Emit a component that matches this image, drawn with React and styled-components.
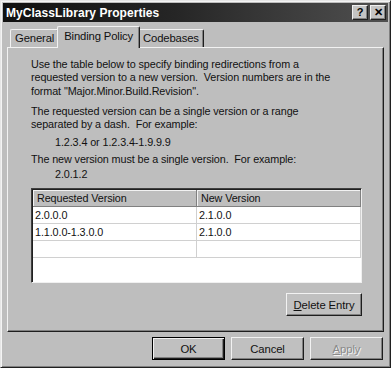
import React from "react";
import styled, { createGlobalStyle } from "styled-components";

const Global = createGlobalStyle`
  html, body { margin: 0; padding: 0; background: #bdbdbd; }
  body { font-family: "Liberation Sans", Arial, sans-serif; font-size: 11px; color: #111; }
`;

const Window = styled.div`
  width: 391px;
  height: 368px;
  box-sizing: border-box;
  background: #bebebe;
  border: 1px solid;
  border-color: #e6e6e6 #202020 #202020 #e6e6e6;
  box-shadow: inset 1px 1px 0 #f4f4f4, inset -1px -1px 0 #808080;
  padding: 2px;
  display: flex;
  flex-direction: column;
  overflow: hidden;
`;

const TitleBar = styled.div`
  height: 19px;
  background: linear-gradient(90deg, #101010 0%, #262626 45%, #505050 100%);
  display: flex;
  align-items: center;
  justify-content: space-between;
  padding: 0 2px 0 3px;
`;

const Title = styled.span`
  color: #fff;
  font-weight: bold;
  font-size: 12px;
  letter-spacing: 0.05px;
`;

const TitleButtons = styled.div`
  display: flex;
  gap: 2px;
`;

const TitleButton = styled.div`
  width: 16px;
  height: 15px;
  box-sizing: border-box;
  background: #c4c4c4;
  border: 1px solid;
  border-color: #f0f0f0 #202020 #202020 #f0f0f0;
  box-shadow: inset -1px -1px 0 #808080;
  display: flex;
  align-items: center;
  justify-content: center;
  font-weight: bold;
  font-size: 11px;
  color: #000;
  line-height: 1;
`;

const Body = styled.div`
  flex: 1;
  display: flex;
  flex-direction: column;
  padding: 2px 4px 0 4px;
`;

const TabRow = styled.div`
  display: flex;
  align-items: flex-end;
  height: 23px;
  padding-left: 3px;
  position: relative;
  z-index: 1;
`;

const Tab = styled.div`
  height: ${(p) => (p.$active ? "22px" : "18px")};
  box-sizing: border-box;
  padding: ${(p) => (p.$active ? "3px 6px 0 6px" : "2px 4px 0 4px")};
  margin: ${(p) => (p.$active ? "0 -2px -1px -2px" : "0")};
  background: #bebebe;
  border: 1px solid;
  border-bottom: none;
  border-color: #f2f2f2 #1e1e1e #1e1e1e #f2f2f2;
  box-shadow: inset -1px 0 0 #808080;
  border-radius: 2px 2px 0 0;
  font-size: 11.3px;
  letter-spacing: -0.15px;
  display: flex;
  align-items: flex-start;
  white-space: nowrap;
  position: relative;
  z-index: ${(p) => (p.$active ? 2 : 1)};
`;

const Panel = styled.div`
  height: 285px;
  box-sizing: border-box;
  border: 1px solid;
  border-color: #f2f2f2 #1e1e1e #1e1e1e #f2f2f2;
  box-shadow: inset -1px -1px 0 #808080;
  padding: 10px 21px 0 23px;
  display: flex;
  flex-direction: column;
`;

const Para = styled.p`
  margin: 0 0 ${(p) => p.$mb || 0}px ${(p) => p.$indent || 0}px;
  font-size: 10.8px;
  letter-spacing: -0.1px;
  line-height: 13.3px;
`;

const Table = styled.div`
  margin-top: 7px;
  height: 95px;
  box-sizing: border-box;
  background: #fff;
  border: 1px solid;
  border-color: #404040 #f0f0f0 #f0f0f0 #404040;
  box-shadow: inset 1px 1px 0 #202020;
  display: flex;
  flex-direction: column;
  padding: 1px 0 0 1px;
`;

const Row = styled.div`
  display: grid;
  grid-template-columns: 164px 1fr;
  height: 17px;
  box-sizing: border-box;
  border-bottom: 1px solid ${(p) => (p.$header ? "#808080" : "#d0d0d0")};
  background: ${(p) => (p.$header ? "#bebebe" : "#fff")};
`;

const Cell = styled.div`
  font-size: 10.8px;
  letter-spacing: -0.1px;
  line-height: 16px;
  padding-left: ${(p) => (p.$header ? "4px" : "2px")};
  white-space: nowrap;
  overflow: hidden;
  border-right: 1px solid ${(p) => (p.$header ? "#808080" : "#d0d0d0")};
  box-shadow: ${(p) => (p.$header ? "inset 1px 1px 0 #f2f2f2" : "none")};
`;

const ButtonRow = styled.div`
  display: flex;
  justify-content: flex-end;
  gap: 7px;
  margin-top: ${(p) => p.$mt || 0}px;
`;

const Button = styled.div`
  width: ${(p) => p.$w || 73}px;
  height: 23px;
  box-sizing: border-box;
  background: #c0c0c0;
  border: 1px solid;
  border-color: ${(p) => (p.$default ? "#000" : "#f2f2f2 #1e1e1e #1e1e1e #f2f2f2")};
  box-shadow: ${(p) =>
    p.$default
      ? "inset 1px 1px 0 #f2f2f2, inset -1px -1px 0 #1e1e1e, inset -2px -2px 0 #808080"
      : "inset -1px -1px 0 #808080"};
  display: flex;
  align-items: center;
  justify-content: center;
  font-size: 11.3px;
  letter-spacing: -0.1px;
  color: ${(p) => (p.$disabled ? "#8a8a8a" : "#111")};
  text-shadow: ${(p) => (p.$disabled ? "1px 1px 0 #f4f4f4" : "none")};
`;

const Footer = styled.div`
  display: flex;
  justify-content: flex-end;
  gap: 6px;
  padding: 5px 1px 0 0;
`;

const U = styled.span`
  text-decoration: underline;
`;

export default function App() {
  return (
    <>
      <Global />
      <Window>
        <TitleBar>
          <Title>MyClassLibrary Properties</Title>
          <TitleButtons>
            <TitleButton>?</TitleButton>
            <TitleButton>✕</TitleButton>
          </TitleButtons>
        </TitleBar>
        <Body>
          <TabRow>
            <Tab>General</Tab>
            <Tab $active>Binding Policy</Tab>
            <Tab>Codebases</Tab>
          </TabRow>
          <Panel>
            <Para $mb={7}>
              Use the table below to specify binding redirections from a<br />
              requested version to a new version.&nbsp; Version numbers are in the<br />
              format "Major.Minor.Build.Revision".
            </Para>
            <Para $mb={5}>
              The requested version can be a single version or a range<br />
              separated by a dash.&nbsp; For example:
            </Para>
            <Para $indent={24} $mb={3}>1.2.3.4 or 1.2.3.4-1.9.9.9</Para>
            <Para $mb={2}>The new version must be a single version.&nbsp; For example:</Para>
            <Para $indent={24}>2.0.1.2</Para>
            <Table>
              <Row $header>
                <Cell $header>Requested Version</Cell>
                <Cell $header>New Version</Cell>
              </Row>
              <Row>
                <Cell>2.0.0.0</Cell>
                <Cell>2.1.0.0</Cell>
              </Row>
              <Row>
                <Cell>1.1.0.0-1.3.0.0</Cell>
                <Cell>2.1.0.0</Cell>
              </Row>
              <Row>
                <Cell></Cell>
                <Cell></Cell>
              </Row>
            </Table>
            <ButtonRow $mt={10}>
              <Button $w={76}>
                <span><U>D</U>elete Entry</span>
              </Button>
            </ButtonRow>
          </Panel>
          <Footer>
            <Button $default>OK</Button>
            <Button>Cancel</Button>
            <Button $disabled>
              <span><U>A</U>pply</span>
            </Button>
          </Footer>
        </Body>
      </Window>
    </>
  );
}
